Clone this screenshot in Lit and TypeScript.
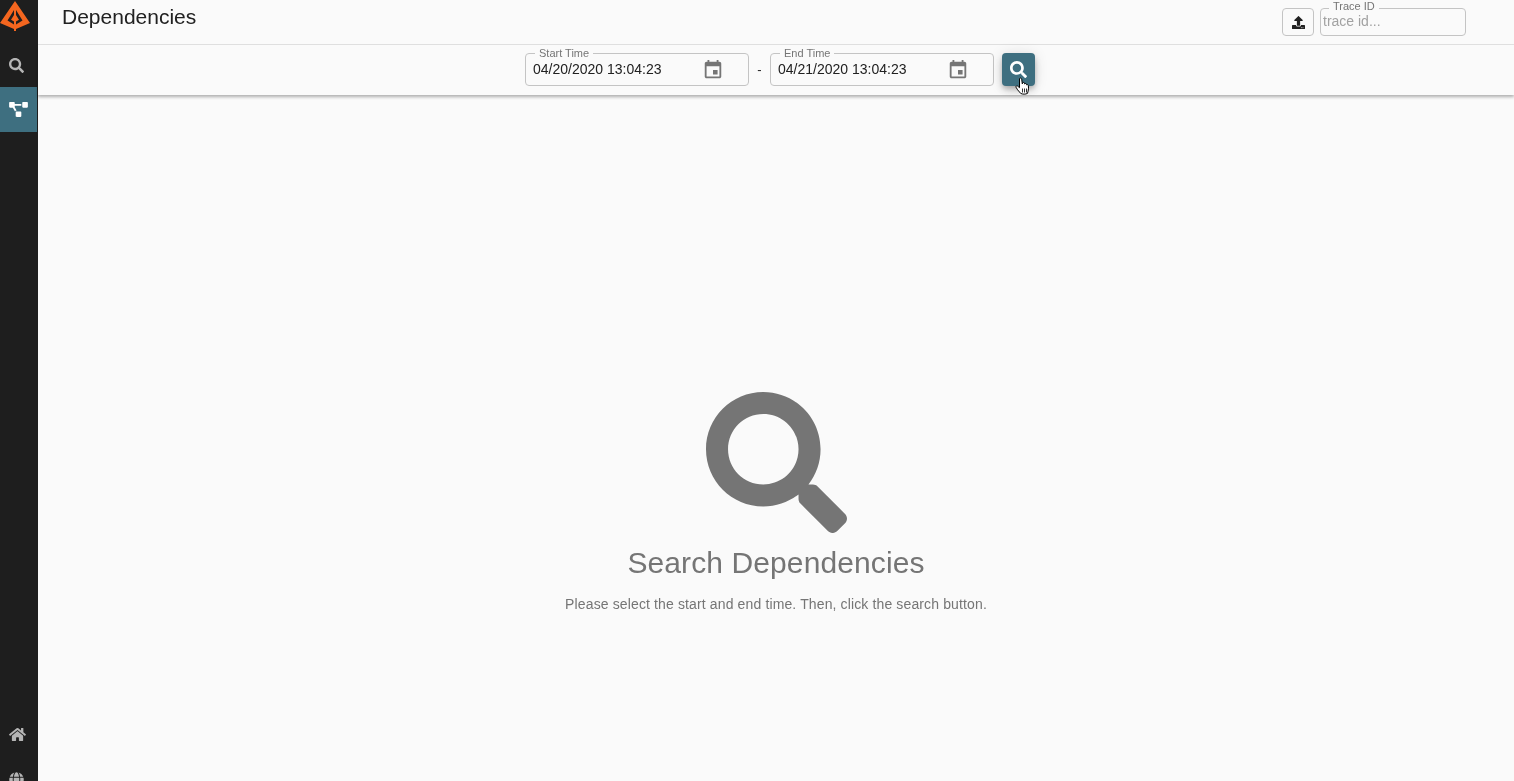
import { LitElement, css, html, svg } from 'lit'
import { customElement } from 'lit/decorators.js'

const searchPath =
  'M505 442.7L405.3 343c-4.5-4.5-10.6-7-17-7H372c27.6-35.3 44-79.7 44-128C416 93.1 322.9 0 208 0S0 93.1 0 208s93.1 208 208 208c48.3 0 92.7-16.4 128-44v16.3c0 6.4 2.5 12.5 7 17l99.7 99.7c9.4 9.4 24.6 9.4 33.9 0l28.3-28.3c9.4-9.4 9.4-24.6.1-34zM208 336c-70.7 0-128-57.2-128-128 0-70.7 57.2-128 128-128 70.7 0 128 57.2 128 128 0 70.7-57.2 128-128 128z'

const searchIcon = (cls: string) => html`
  <svg class=${cls} viewBox="0 0 512 512"><path fill="currentColor" d=${searchPath} /></svg>
`

const calendarIcon = html`
  <svg class="calendar" viewBox="0 0 24 24">
    <path
      fill="currentColor"
      d="M17 12h-5v5h5v-5zM16 1v2H8V1H6v2H5c-1.11 0-1.99.9-1.99 2L3 19c0 1.1.89 2 2 2h14c1.1 0 2-.9 2-2V5c0-1.1-.9-2-2-2h-1V1h-2zm3 18H5V8h14v11z"
    />
  </svg>
`

const logo = svg`
  <path fill="#f4661f" d="M15 1 L30 23 L16 29 L16 31 L14 31 L14 29 L0 23 Z" />
  <path
    fill="#1e1e1e"
    d="M14 10 L7.500 20.500 L14 24.500 L14 21.500 L11 19.800 L14 15 Z M16 10 L22.500 20.500 L16 24.500 L16 21.500 L19 19.800 L16 15 Z"
  />
`

@customElement('app-root')
export class AppRoot extends LitElement {
  private dateField(label: string, value: string) {
    return html`
      <div class="field date">
        <span class="legend">${label}</span>
        <span class="value">${value}</span>
        ${calendarIcon}
      </div>
    `
  }

  protected render() {
    return html`
      <nav class="sidebar">
        <div class="logo"><svg viewBox="0 0 31 32" width="31" height="32">${logo}</svg></div>
        <div class="nav-item search">${searchIcon('nav-icon')}</div>
        <div class="nav-item active">
          <svg class="nav-icon diagram" viewBox="0 0 640 512">
            <path
              fill="currentColor"
              d="M384 320H256c-17.67 0-32 14.33-32 32v128c0 17.67 14.33 32 32 32h128c17.67 0 32-14.33 32-32V352c0-17.67-14.33-32-32-32zM192 32c0-17.67-14.33-32-32-32H32C14.33 0 0 14.33 0 32v128c0 17.67 14.33 32 32 32h95.72l73.16 128.04C211.98 300.98 232.4 288 256 288h.28L192 175.51V128h224V64H192V32zM608 0H480c-17.67 0-32 14.33-32 32v128c0 17.67 14.33 32 32 32h128c17.67 0 32-14.33 32-32V32c0-17.67-14.33-32-32-32z"
            />
          </svg>
        </div>
        <div class="spacer"></div>
        <div class="nav-item home">
          <svg class="nav-icon" viewBox="0 0 576 512">
            <path
              fill="currentColor"
              d="M280.37 148.26L96 300.11V464a16 16 0 0 0 16 16l112.06-.29a16 16 0 0 0 15.92-16V368a16 16 0 0 1 16-16h64a16 16 0 0 1 16 16v95.64a16 16 0 0 0 16 16.05L464 480a16 16 0 0 0 16-16V300L295.67 148.26a12.19 12.19 0 0 0-15.3 0zM571.6 251.47L488 182.56V44.05a12 12 0 0 0-12-12h-56a12 12 0 0 0-12 12v72.61L318.47 43a48 48 0 0 0-61 0L4.34 251.47a12 12 0 0 0-1.6 16.9l25.5 31A12 12 0 0 0 45.15 301l235.22-193.74a12.19 12.19 0 0 1 15.3 0L530.9 301a12 12 0 0 0 16.9-1.6l25.5-31a12 12 0 0 0-1.7-16.93z"
            />
          </svg>
        </div>
        <div class="nav-item">
          <svg class="nav-icon" viewBox="0 0 496 512">
            <path
              fill="currentColor"
              d="M336.5 160C322 70.7 287.8 8 248 8s-74 62.7-88.5 152h177zM152 256c0 22.2 1.2 43.5 3.3 64h185.3c2.1-20.5 3.3-41.8 3.3-64s-1.2-43.5-3.3-64H155.3c-2.1 20.5-3.3 41.8-3.3 64zm324.7-96c-28.6-67.9-86.5-120.4-158-141.6 24.4 33.8 41.2 84.7 50 141.6h108zM177.2 18.4C105.8 39.6 47.8 92.1 19.3 160h108c8.7-56.9 25.5-107.8 49.9-141.6zM487.4 192H372.7c2.1 21 3.3 42.5 3.3 64s-1.2 43-3.3 64h114.6c5.5-20.5 8.6-41.8 8.6-64s-3.1-43.5-8.5-64zM120 256c0-21.5 1.2-43 3.3-64H8.6C3.2 212.5 0 233.8 0 256s3.2 43.5 8.6 64h114.6c-2-21-3.2-42.5-3.2-64zm39.5 96c14.5 89.3 48.7 152 88.5 152s74-62.7 88.5-152h-177zm159.3 141.6c71.4-21.2 129.4-73.7 158-141.6h-108c-8.8 56.9-25.6 107.8-50 141.6zM19.3 352c28.6 67.9 86.5 120.4 158 141.6-24.4-33.8-41.2-84.7-50-141.6h-108z"
            />
          </svg>
        </div>
      </nav>

      <div class="page">
        <header class="topbar">
          <h1>Dependencies</h1>
          <div class="topbar-right">
            <button class="upload">
              <svg viewBox="0 0 512 512">
                <path
                  fill="currentColor"
                  d="M296 384h-80c-13.3 0-24-10.7-24-24V192h-87.7c-17.8 0-26.7-21.5-14.1-34.1L242.3 5.7c7.5-7.5 19.8-7.5 27.3 0l152.2 152.2c12.6 12.6 3.7 34.1-14.1 34.1H320v168c0 13.3-10.7 24-24 24zm216-8v112c0 13.3-10.7 24-24 24H24c-13.3 0-24-10.7-24-24V376c0-13.3 10.7-24 24-24h136v8c0 30.9 25.1 56 56 56h80c30.9 0 56-25.1 56-56v-8h136c13.3 0 24 10.7 24 24zm-124 88c0-11-9-20-20-20s-20 9-20 20 9 20 20 20 20-9 20-20zm64 0c0-11-9-20-20-20s-20 9-20 20 9 20 20 20 20-9 20-20z"
                />
              </svg>
            </button>
            <div class="field trace">
              <span class="legend">Trace ID</span>
              <span class="placeholder">trace id...</span>
            </div>
          </div>
        </header>

        <div class="filters">
          ${this.dateField('Start Time', '04/20/2020 13:04:23')}
          <span class="dash">-</span>
          ${this.dateField('End Time', '04/21/2020 13:04:23')}
          <button class="go">
            ${searchIcon('go-icon')}
            <svg class="cursor" viewBox="0 0 16 20" width="16" height="20">
              <path
                fill="#fff"
                stroke="#000"
                stroke-width="1"
                stroke-linejoin="round"
                d="M4.5 1.5c.8-.8 2-.4 2.2.7l.6 4.6.4-.9c.5-.7 1.6-.5 1.8.3l.2.8c.4-.7 1.5-.6 1.8.2l.2.7c.5-.5 1.4-.3 1.6.4.4 1.8.3 4-.2 5.8l-.6 2.3c-1.8 1-5 1-6.800 0L2.600 12.800 1 10.200c-.4-.9.6-1.800 1.500-1.200l2 1.700z"
              />
              <path stroke="#000" stroke-width=".8" d="M7.500 11.500v4M9.500 11.500v4M11.500 11.500v4" />
            </svg>
          </button>
        </div>

        <main class="empty">
          <svg class="empty-icon" viewBox="0 0 512 512"><path fill="currentColor" d=${searchPath} /></svg>
          <h2>Search Dependencies</h2>
          <p>Please select the start and end time. Then, click the search button.</p>
        </main>
      </div>
    `
  }

  static styles = css`
    :host {
      display: flex;
      height: 100vh;
      overflow: hidden;
      background: #fafafa;
      color: #212121;
      font-family: 'Liberation Sans', Arial, sans-serif;
    }
    svg {
      display: block;
    }
    .sidebar {
      flex: none;
      width: 38px;
      height: 100vh;
      overflow: hidden;
      background: #1e1e1e;
      color: #b5b5b5;
      display: flex;
      flex-direction: column;
    }
    .logo {
      flex: none;
      height: 42px;
    }
    .nav-item {
      flex: none;
      width: 37px;
      height: 45px;
      display: flex;
      align-items: center;
      justify-content: center;
      padding-right: 4px;
      box-sizing: border-box;
    }
    .nav-item.search {
      padding-top: 2px;
    }
    .nav-item.active {
      background: #3e6f80;
      color: #fff;
      padding-right: 0;
    }
    .nav-item.home {
      padding-right: 3px;
    }
    .nav-icon {
      width: 15px;
      height: 15px;
    }
    .nav-icon.diagram {
      width: 19px;
    }
    .home .nav-icon {
      width: 17px;
    }
    .spacer {
      flex: none;
      height: 580px;
    }
    .page {
      flex: 1;
      min-width: 0;
      display: flex;
      flex-direction: column;
      will-change: transform;
    }
    .topbar {
      flex: none;
      height: 44px;
      border-bottom: 1px solid #e3e3e3;
      display: flex;
      justify-content: space-between;
      padding: 0 48px 0 24px;
    }
    h1 {
      margin: 5px 0 0;
      font-size: 21px;
      line-height: 23px;
      font-weight: 400;
    }
    .topbar-right {
      display: flex;
      gap: 6px;
      padding-top: 8px;
    }
    .upload {
      width: 32px;
      height: 28px;
      padding: 0;
      border: 1px solid #c4c4c4;
      border-radius: 4px;
      background: transparent;
      color: #212121;
      display: flex;
      align-items: center;
      justify-content: center;
    }
    .upload svg {
      width: 13px;
      height: 13px;
    }
    .field {
      position: relative;
      box-sizing: border-box;
      border: 1px solid #c4c4c4;
      border-radius: 4px;
      display: flex;
      align-items: center;
    }
    .legend {
      position: absolute;
      top: -7px;
      left: 9px;
      padding: 0 4px;
      background: #fafafa;
      color: #757575;
      font-size: 11px;
      line-height: 12px;
    }
    .trace {
      width: 146px;
      height: 28px;
      padding: 0 0 2px 2px;
    }
    .trace .legend {
      top: -9px;
      left: 8px;
    }
    .placeholder {
      color: #a2a2a2;
      font-size: 14px;
    }
    .filters {
      flex: none;
      height: 50px;
      box-sizing: border-box;
      padding: 8px 0 0 8px;
      display: flex;
      justify-content: center;
      align-items: flex-start;
      box-shadow: 0 2px 3px rgba(0, 0, 0, 0.3);
      position: relative;
    }
    .date {
      width: 224px;
      height: 33px;
      padding: 0 0 1px 7px;
    }
    .value {
      font-size: 14px;
      color: #212121;
    }
    .calendar {
      position: absolute;
      left: 176px;
      top: 5px;
      width: 22px;
      height: 22px;
      color: #757575;
    }
    .dash {
      width: 21px;
      text-align: center;
      font-size: 13px;
      line-height: 33px;
    }
    .go {
      position: relative;
      width: 33px;
      height: 33px;
      margin-left: 8px;
      padding: 0;
      border: 0;
      border-radius: 4px;
      background: #3e6f80;
      color: #fff;
      display: flex;
      align-items: center;
      justify-content: center;
      box-shadow: 0 3px 5px -1px rgba(0, 0, 0, 0.2), 0 5px 8px rgba(0, 0, 0, 0.14), 0 1px 14px rgba(0, 0, 0, 0.12);
    }
    .go-icon {
      width: 17px;
      height: 17px;
    }
    .cursor {
      position: absolute;
      left: 13px;
      top: 24px;
    }
    .empty {
      flex: 1;
      display: flex;
      flex-direction: column;
      align-items: center;
      padding-top: 297px;
      color: #757575;
    }
    .empty-icon {
      width: 141px;
      height: 141px;
    }
    h2 {
      margin: 13px 0 0;
      font-size: 30px;
      line-height: 34px;
      font-weight: 400;
      letter-spacing: 0.1px;
    }
    p {
      margin: 14px 0 0;
      font-size: 14px;
      line-height: 20px;
      letter-spacing: 0.13px;
    }
  `
}

declare global {
  interface HTMLElementTagNameMap {
    'app-root': AppRoot
  }
}
